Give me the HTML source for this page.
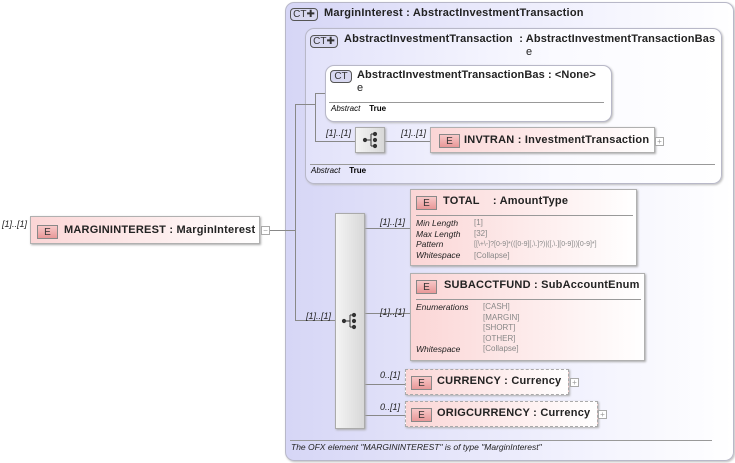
<!DOCTYPE html>
<html><head><style>
*{margin:0;padding:0;box-sizing:border-box}
body{width:735px;height:463px;background:#fff;position:relative;font-family:"Liberation Sans",sans-serif;overflow:hidden}
.a{position:absolute}
.ct{border:1px solid #b8b8c8;border-radius:9px;background:linear-gradient(90deg,#d6d6f6,#f4f4fe 70%,#fff);box-shadow:1px 1px 2px #bbb}
.t{font-size:11px;font-weight:bold;color:#222;white-space:nowrap;letter-spacing:0.22px}
.ic{border:1px solid #555;border-radius:4px;background:#d8d8f0;font-size:10px;color:#333;text-align:center;line-height:11px;height:13px}
.el{background:linear-gradient(90deg,#fbd6d6,#fff);border:1px solid #b0b0b0;box-shadow:1px 1px 2px #aaa}
.dash{border:1px dashed #aaa}
.e{position:absolute;width:21px;height:14px;border:1px solid #888;background:linear-gradient(#f8c8c8,#e89898);font-size:10px;text-align:center;line-height:13px;color:#333}
.m{font-size:9px;font-style:italic;color:#222;white-space:nowrap}
.k{font-size:8.5px;font-style:italic;color:#222;line-height:10.6px}
.v{font-size:8px;color:#888;line-height:10.6px;white-space:nowrap}
.ln{position:absolute;background:#888}
.hr{position:absolute;height:1px;background:#999}
.pl{position:absolute;width:9px;height:9px;border:1px solid #aaa;font-size:8px;line-height:7px;text-align:center;color:#999;background:#fff}
.seq{background:linear-gradient(90deg,#f4f4f4,#d8d8d8);border:1px solid #aaa;box-shadow:1px 1px 2px #aaa}
</style></head><body>
<div class="a ct" style="left:285px;top:2px;width:449px;height:459px"></div>
<div class="a ic" style="left:290px;top:8px;width:28px">CT✚</div>
<div class="a t" style="left:324px;top:7px">MarginInterest : AbstractInvestmentTransaction</div>

<div class="a ct" style="left:305px;top:28px;width:417px;height:156px;background:linear-gradient(90deg,#e2e2fa,#fafaff 60%,#fff)"></div>
<div class="a ic" style="left:310px;top:35px;width:28px">CT✚</div>
<div class="a t" style="left:344px;top:33px;letter-spacing:0.15px">AbstractInvestmentTransaction&nbsp; : AbstractInvestmentTransactionBas</div>
<div class="a t" style="left:526px;top:46px;font-weight:normal">e</div>

<div class="a ct" style="left:325px;top:65px;width:287px;height:57px;background:#fff"></div>
<div class="a ic" style="left:330px;top:70px;width:22px">CT</div>
<div class="a t" style="left:357px;top:69px;letter-spacing:0.1px">AbstractInvestmentTransactionBas : &lt;None&gt;</div>
<div class="a t" style="left:357px;top:82px;font-weight:normal">e</div>
<div class="hr" style="left:329px;top:102px;width:275px"></div>
<div class="a" style="left:331px;top:104px;font-size:8px"><i>Abstract</i>&nbsp;&nbsp;&nbsp; <b>True</b></div>

<div class="hr" style="left:310px;top:164px;width:405px"></div>
<div class="a" style="left:311px;top:166px;font-size:8px"><i>Abstract</i>&nbsp;&nbsp;&nbsp; <b>True</b></div>

<div class="ln" style="left:261px;top:230px;width:35px;height:1px"></div>
<div class="ln" style="left:295px;top:104px;width:1px;height:217px"></div>
<div class="ln" style="left:295px;top:104px;width:21px;height:1px"></div>
<div class="ln" style="left:315px;top:93px;width:1px;height:49px"></div>
<div class="ln" style="left:315px;top:93px;width:10px;height:1px"></div>
<div class="ln" style="left:315px;top:141px;width:40px;height:1px"></div>
<div class="ln" style="left:384px;top:141px;width:46px;height:1px"></div>
<div class="ln" style="left:295px;top:320px;width:40px;height:1px"></div>
<div class="ln" style="left:364px;top:228px;width:46px;height:1px"></div>
<div class="ln" style="left:364px;top:313px;width:46px;height:1px"></div>
<div class="ln" style="left:364px;top:384px;width:41px;height:1px"></div>
<div class="ln" style="left:364px;top:415px;width:41px;height:1px"></div>

<div class="a m" style="left:326px;top:128px">[1]..[1]</div>
<div class="a seq" style="left:355px;top:127px;width:30px;height:26px"></div>
<svg class="a" style="left:362px;top:131px" width="18" height="18"><g fill="#333" stroke="#333" stroke-width="1"><circle cx="3" cy="9" r="1.6"/><line x1="3" y1="9" x2="9" y2="9"/><line x1="9" y1="3" x2="9" y2="15"/><line x1="9" y1="3" x2="13" y2="3"/><line x1="9" y1="15" x2="13" y2="15"/><circle cx="13" cy="3" r="1.6"/><circle cx="13" cy="9" r="1.6"/><circle cx="13" cy="15" r="1.6"/></g></svg>
<div class="a m" style="left:401px;top:128px">[1]..[1]</div>
<div class="a el" style="left:430px;top:127px;width:225px;height:26px"><div class="e" style="left:8px;top:6px">E</div><div class="a t" style="left:33px;top:6px">INVTRAN : InvestmentTransaction</div></div>
<div class="pl" style="left:655px;top:137px">+</div>

<div class="a m" style="left:2px;top:219px">[1]..[1]</div>
<div class="a el" style="left:30px;top:216px;width:230px;height:28px"><div class="e" style="left:6px;top:8px">E</div><div class="a t" style="left:33px;top:7px">MARGININTEREST : MarginInterest</div></div>
<div class="pl" style="left:261px;top:226px">−</div>

<div class="a m" style="left:306px;top:311px">[1]..[1]</div>
<div class="a seq" style="left:335px;top:213px;width:30px;height:216px"></div>
<svg class="a" style="left:341px;top:312px" width="18" height="18"><g fill="#333" stroke="#333" stroke-width="1"><circle cx="3" cy="9" r="1.6"/><line x1="3" y1="9" x2="9" y2="9"/><line x1="9" y1="3" x2="9" y2="15"/><line x1="9" y1="3" x2="13" y2="3"/><line x1="9" y1="15" x2="13" y2="15"/><circle cx="13" cy="3" r="1.6"/><circle cx="13" cy="9" r="1.6"/><circle cx="13" cy="15" r="1.6"/></g></svg>

<div class="a m" style="left:380px;top:217px">[1]..[1]</div>
<div class="a el" style="left:410px;top:189px;width:227px;height:77px">
<div class="e" style="left:5px;top:6px">E</div><div class="a t" style="left:32px;top:5px">TOTAL&nbsp;&nbsp;&nbsp; : AmountType</div>
<div class="hr" style="left:5px;top:25px;width:217px"></div>
<div class="a k" style="left:5px;top:28px">Min Length<br>Max Length<br>Pattern<br>Whitespace</div>
<div class="a v" style="left:63px;top:28px">[1]<br>[32]<br><span style="font-size:7px">[[\+\-]?[0-9]*(([0-9][,\.]?)|([,\.][0-9]))[0-9]*]</span><br>[Collapse]</div>
</div>

<div class="a m" style="left:380px;top:307px">[1]..[1]</div>
<div class="a el" style="left:410px;top:273px;width:235px;height:88px">
<div class="e" style="left:5px;top:6px">E</div><div class="a t" style="left:33px;top:5px">SUBACCTFUND : SubAccountEnum</div>
<div class="hr" style="left:5px;top:25px;width:225px"></div>
<div class="a k" style="left:5px;top:28px">Enumerations<br><br><br><br>Whitespace</div>
<div class="a v" style="left:72px;top:28px">[CASH]<br>[MARGIN]<br>[SHORT]<br>[OTHER]<br>[Collapse]</div>
</div>

<div class="a m" style="left:380px;top:370px">0..[1]</div>
<div class="a el dash" style="left:405px;top:369px;width:164px;height:26px"><div class="e" style="left:5px;top:6px">E</div><div class="a t" style="left:31px;top:5px">CURRENCY : Currency</div></div>
<div class="pl" style="left:570px;top:378px">+</div>

<div class="a m" style="left:380px;top:402px">0..[1]</div>
<div class="a el dash" style="left:405px;top:401px;width:193px;height:26px"><div class="e" style="left:5px;top:6px">E</div><div class="a t" style="left:31px;top:5px">ORIGCURRENCY : Currency</div></div>
<div class="pl" style="left:598px;top:410px">+</div>

<div class="hr" style="left:290px;top:440px;width:422px"></div>
<div class="a" style="left:291px;top:442px;font-size:8.5px;font-style:italic;color:#222">The OFX element "MARGININTEREST" is of type "MarginInterest"</div>
</body></html>
